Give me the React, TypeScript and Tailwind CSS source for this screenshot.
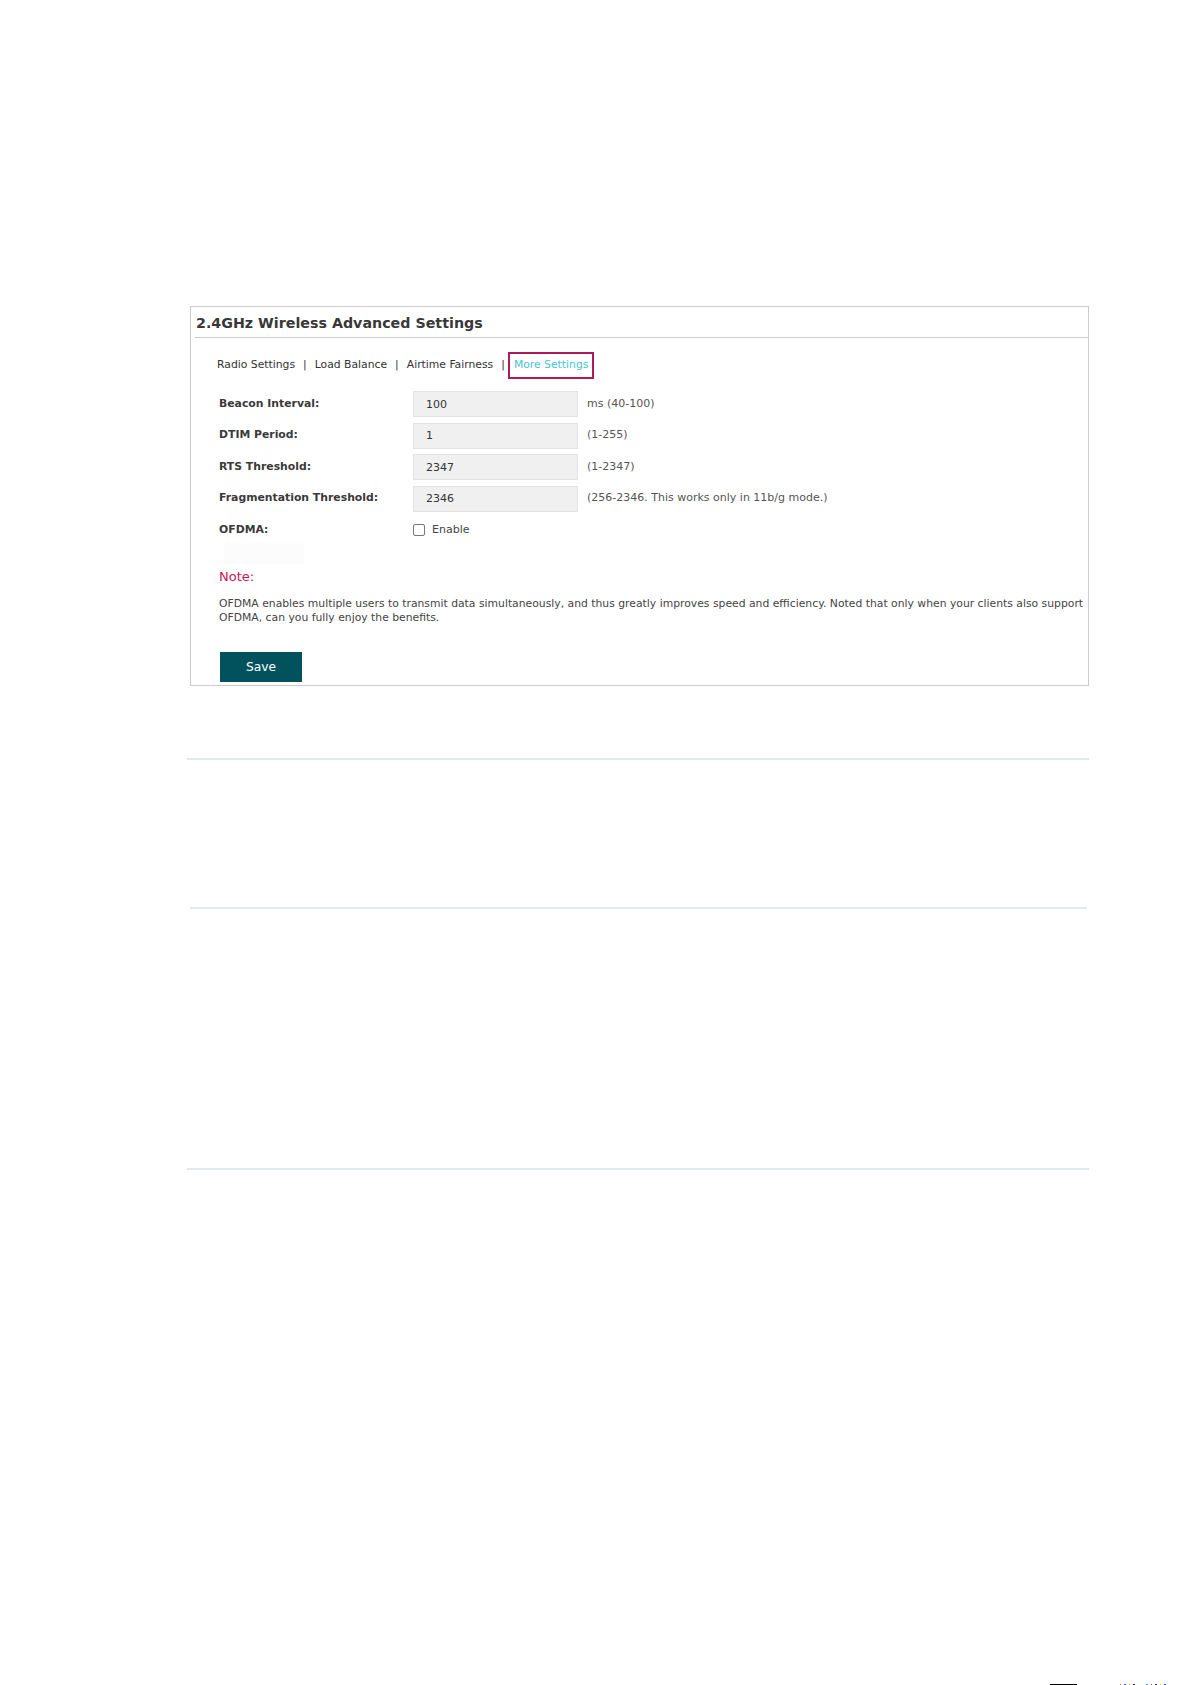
import React, { useState } from "react";

// Advanced wireless settings panel for the 2.4GHz band
const tabs = ["Radio Settings", "Load Balance", "Airtime Fairness", "More Settings"];

const fields = [
  { label: "Beacon Interval:", value: "100", hint: "ms (40-100)" },
  { label: "DTIM Period:", value: "1", hint: "(1-255)" },
  { label: "RTS Threshold:", value: "2347", hint: "(1-2347)" },
  {
    label: "Fragmentation Threshold:",
    value: "2346",
    hint: "(256-2346. This works only in 11b/g mode.)",
  },
];

export default function App() {
  const [active, setActive] = useState("More Settings");
  const [values, setValues] = useState(fields.map((f) => f.value));
  const [ofdma, setOfdma] = useState(false);

  return (
    <div className="relative w-full h-[1685px] bg-white overflow-hidden font-['DejaVu_Sans',sans-serif] text-[#333]">
      <div className="pt-[306px] pl-[190px]">
        {/* Settings panel */}
        <div className="w-[899px] h-[380px] border border-[#cbcbcb] overflow-hidden">
          <div className="ml-[4px] h-[31px] pt-[3px] flex items-center border-b border-[#cbcbcb]">
            <h2 className="pl-[1px] text-[14.25px] font-bold text-[#383838]">
              2.4GHz Wireless Advanced Settings
            </h2>
          </div>

          {/* Tabs */}
          <div className="mt-[14px] h-[27px] pl-[26px] flex items-center text-[10.8px]">
            {tabs.map((t, i) => (
              <React.Fragment key={t}>
                {i > 0 && (
                  <span
                    className={
                      i === tabs.length - 1
                        ? "ml-[8px] mr-[3px] text-[#333]"
                        : "mx-[8px] text-[#333]"
                    }
                  >
                    |
                  </span>
                )}
                {t === active ? (
                  <span className="h-[27px] flex items-center px-[4px] border-2 border-[#b2195b] text-[#45c6d3]">
                    {t}
                  </span>
                ) : (
                  <button onClick={() => setActive(t)} className="text-[#333]">
                    {t}
                  </button>
                )}
              </React.Fragment>
            ))}
          </div>

          {/* Fields */}
          <div className="mt-[12px] pl-[28px] flex flex-col gap-[5.5px]">
            {fields.map((f, i) => (
              <div key={f.label} className="h-[26px] flex items-center">
                <label className="w-[194px] text-[10.85px] font-bold text-[#3a3a3a]">
                  {f.label}
                </label>
                <input
                  value={values[i]}
                  onChange={(e) =>
                    setValues(values.map((v, j) => (j === i ? e.target.value : v)))
                  }
                  className="w-[165px] h-[26px] pl-[12px] bg-[#f0f0f0] border border-[#e3e3e3] text-[11px] text-[#333] outline-none"
                />
                <span className="ml-[9px] text-[11px] text-[#555]">{f.hint}</span>
              </div>
            ))}
            <div className="h-[26px] flex items-center">
              <label className="w-[194px] text-[10.85px] font-bold text-[#3a3a3a]">
                OFDMA:
              </label>
              <button
                onClick={() => setOfdma(!ofdma)}
                className="w-[12px] h-[12px] border border-[#777] rounded-[2px] bg-white flex items-center justify-center"
              >
                {ofdma && <span className="w-[6px] h-[6px] bg-[#02525e]" />}
              </button>
              <span className="ml-[7px] text-[11px] text-[#444]">Enable</span>
            </div>
          </div>
          <div className="ml-[33px] w-[80px] h-[21px] bg-[#fcfcfc]" />

          {/* Note */}
          <p className="mt-[5px] pl-[28px] text-[13px] leading-[16px] text-[#c4175b]">
            Note:
          </p>
          <p className="mt-[12px] pl-[28px] text-[10.8px] leading-[14.4px] text-[#444] whitespace-nowrap">
            OFDMA enables multiple users to transmit data simultaneously, and thus greatly
            improves speed and efficiency. Noted that only when your clients also support
            <br />
            OFDMA, can you fully enjoy the benefits.
          </p>

          <button className="mt-[26px] ml-[29px] w-[82px] h-[30px] bg-[#02525e] text-white text-[12.3px]">
            Save
          </button>
        </div>
      </div>

      {/* Section rules */}
      <div className="mt-[72px] ml-[187px] w-[902px] h-[2px] bg-[#e0e9ed]" />
      <div className="mt-[147px] ml-[190px] w-[897px] h-[2px] bg-[#e0e9ed]" />
      <div className="mt-[259px] ml-[187px] w-[902px] h-[2px] bg-[#e0e9ed]" />

      {/* Page footer edge */}
      <div className="absolute bottom-0 left-0 w-full h-[1px] flex items-end">
        <div className="ml-[1050px] w-[27px] h-[1px] bg-black" />
        <div className="ml-[43px] flex gap-[3px]">
          <span className="w-[1px] h-[1px] bg-[#e05050]" />
          <span className="w-[2px] h-[1px] bg-[#3050d0]" />
          <span className="w-[1px] h-[1px] bg-[#d0a020]" />
          <span className="w-[2px] h-[1px] bg-[#333]" />
          <span className="ml-[8px] w-[2px] h-[1px] bg-[#40a0c0]" />
          <span className="w-[1px] h-[1px] bg-[#c03080]" />
          <span className="w-[2px] h-[1px] bg-[#333]" />
          <span className="w-[1px] h-[1px] bg-[#e0c020]" />
          <span className="w-[2px] h-[1px] bg-[#3050d0]" />
        </div>
      </div>
    </div>
  );
}
